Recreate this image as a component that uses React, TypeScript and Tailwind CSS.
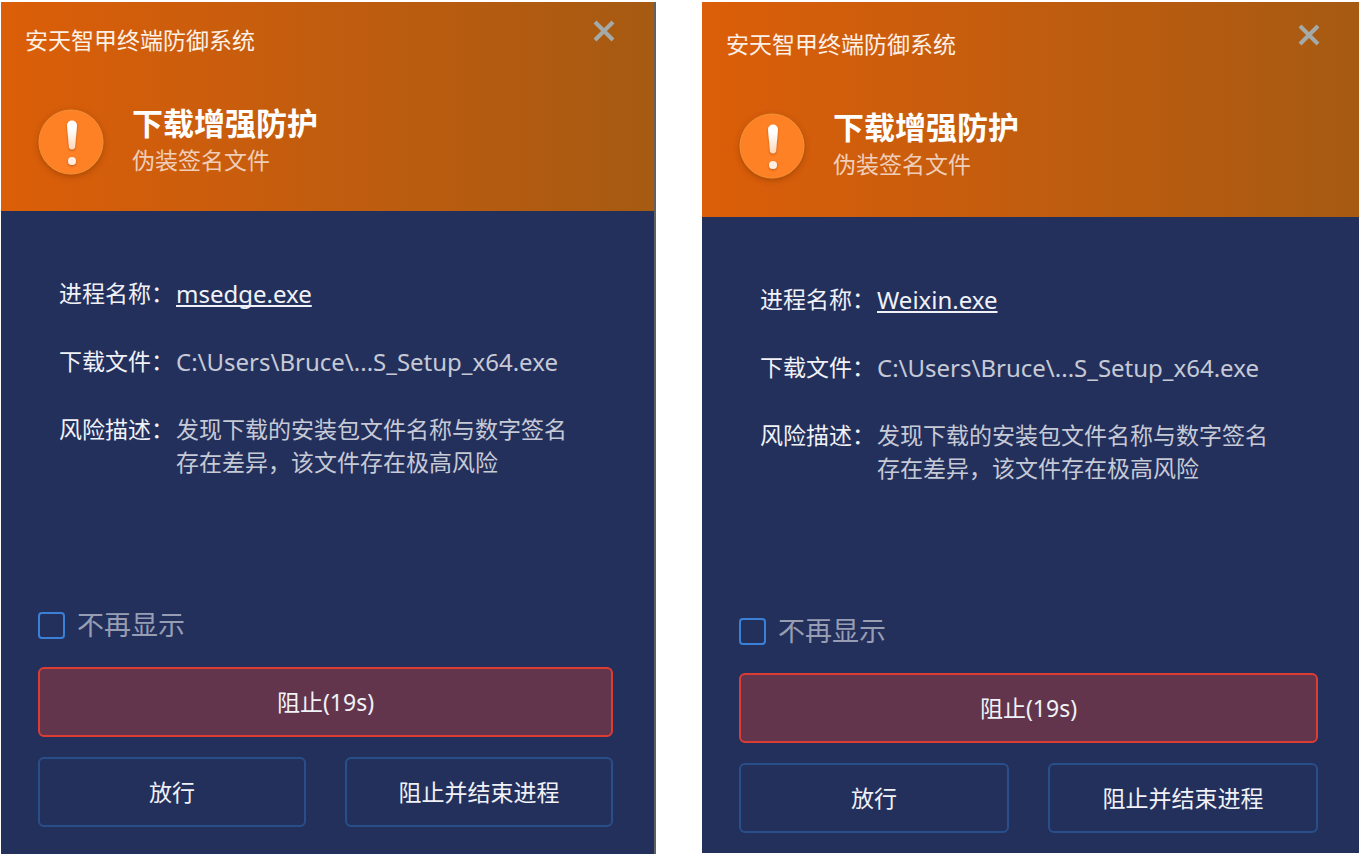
import { useState } from 'react';
import clsx from 'clsx';

interface Alert {
  id: string;
  process: string;
  file: string;
  frame: string;
  header: string;
  body: string;
}

const alerts: Alert[] = [
  {
    id: 'msedge',
    process: 'msedge.exe',
    file: 'C:\\Users\\Bruce\\...S_Setup_x64.exe',
    frame: 'border-r-2 border-[#5f6064]',
    header: 'pt-[13px] pb-8',
    body: 'pb-[27px]',
  },
  {
    id: 'weixin',
    process: 'Weixin.exe',
    file: 'C:\\Users\\Bruce\\...S_Setup_x64.exe',
    frame: '',
    header: 'pt-[17px] pb-[34px]',
    body: 'pb-5',
  },
];

function WarningIcon({ id }: { id: string }) {
  return (
    <svg viewBox="0 0 66 66" className="size-[66px] shrink-0 overflow-visible" aria-hidden="true">
      <defs>
        <linearGradient id={`mark-${id}`} x1="0" y1="0" x2="0" y2="1">
          <stop offset="0.3" stopColor="#ffffff" />
          <stop offset="1" stopColor="#ffd6b8" />
        </linearGradient>
        <filter id={`shadow-${id}`} x="-30%" y="-30%" width="160%" height="160%">
          <feDropShadow dx="0" dy="2" stdDeviation="3" floodColor="#7a3000" floodOpacity="0.5" />
        </filter>
        <filter id={`lift-${id}`} x="-50%" y="-20%" width="200%" height="150%">
          <feDropShadow dx="0" dy="1" stdDeviation="1" floodColor="#8a3a00" floodOpacity="0.6" />
        </filter>
      </defs>
      <circle cx="33" cy="33" r="32" fill="#ff8126" stroke="#f19035" strokeWidth="1" filter={`url(#shadow-${id})`} />
      <g filter={`url(#lift-${id})`}>
        <path d="M29 16.5a5 5 0 0 1 10 0L37 38.5a3.2 3.2 0 0 1-6 0Z" fill={`url(#mark-${id})`} />
        <circle cx="34" cy="52" r="4" fill="#ffeee2" />
      </g>
    </svg>
  );
}

function AlertDialog({ alert }: { alert: Alert }) {
  const [muted, setMuted] = useState(false);

  return (
    <section role="dialog" aria-labelledby={`title-${alert.id}`} className={clsx('min-w-0 bg-[#24305c]', alert.frame)}>
      <header className={clsx('bg-linear-to-r from-[#dc5e08] to-[#a65a12] pr-[34px]', alert.header)}>
        <div className="flex items-start justify-between pl-6">
          <div className="pt-[9px] text-[23px] leading-8 text-[#fdf0e6]">安天智甲终端防御系统</div>
          <button type="button" aria-label="关闭" className="flex size-8 items-center justify-center">
            <svg viewBox="0 0 22 22" className="size-[22px]" stroke="#a3aaa8" strokeWidth="4" aria-hidden="true">
              <path d="M2 2l18 18M20 2l-18 18" />
            </svg>
          </button>
        </div>
        <div className="mt-[49px] flex items-center gap-7 pl-[37px]">
          <WarningIcon id={alert.id} />
          <div>
            <h2 id={`title-${alert.id}`} className="text-[31px] leading-[37px] font-bold text-white">
              下载增强防护
            </h2>
            <p className="text-[23px] leading-[37px] text-[#f0cdb8]">伪装签名文件</p>
          </div>
        </div>
      </header>

      <div className={clsx('pt-[66px] pr-[41px] pl-[37px]', alert.body)}>
        <dl className="grid grid-cols-[117px_minmax(0,400px)] gap-y-[35px] pl-[21px] text-[23px] leading-[33px] text-[#c6cad6]">
          <dt className="text-[#f0f2f7]">进程名称：</dt>
          <dd className="text-2xl leading-[33px]">
            <a
              href="#process"
              className="text-[#f0f2f7] underline decoration-2 underline-offset-2 [text-decoration-skip-ink:none]"
            >
              {alert.process}
            </a>
          </dd>
          <dt className="text-[#f0f2f7]">下载文件：</dt>
          <dd className="text-2xl leading-[33px] whitespace-nowrap">{alert.file}</dd>
          <dt className="text-[#f0f2f7]">风险描述：</dt>
          <dd>发现下载的安装包文件名称与数字签名存在差异，该文件存在极高风险</dd>
        </dl>

        <label className="mt-[132px] flex w-fit items-center gap-3 text-[27px] leading-7 text-[#979eb4]">
          <input
            type="checkbox"
            checked={muted}
            onChange={(e) => setMuted(e.target.checked)}
            className="size-[27px] appearance-none rounded-sm border-2 border-[#3a80d6] checked:bg-[#3a80d6]"
          />
          不再显示
        </label>

        <button
          type="button"
          className="mt-7 h-[70px] w-full rounded-md border-2 border-[#dc3c32] bg-[#63354c] text-[23px] text-[#f0f2f7]"
        >
          阻止(19s)
        </button>
        <div className="mt-5 grid grid-cols-2 gap-[39px] text-[23px] text-[#f0f2f7]">
          <button type="button" className="h-[70px] rounded-md border-2 border-[#294f8a]">
            放行
          </button>
          <button type="button" className="h-[70px] rounded-md border-2 border-[#294f8a]">
            阻止并结束进程
          </button>
        </div>
      </div>
    </section>
  );
}

export default function App() {
  return (
    <main className="grid grid-cols-[655fr_657fr] items-start gap-[46px] bg-white pt-0.5 pr-0.5 pl-px font-['Noto_Sans','Noto_Sans_CJK_SC',sans-serif]">
      {alerts.map((alert) => (
        <AlertDialog key={alert.id} alert={alert} />
      ))}
    </main>
  );
}
